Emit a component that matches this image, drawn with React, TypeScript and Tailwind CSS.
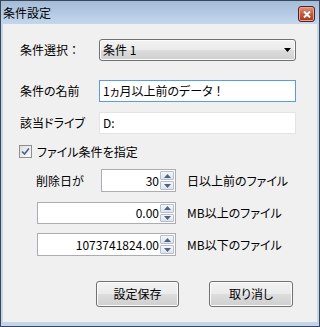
import React from "react";

function SpinBox({ width, height, value }: { width: string; height: string; value: string }) {
  return (
    <div className={`${width} ${height} flex border border-[#abadb3] bg-white`}>
      <div className="flex-1 flex items-center justify-end pr-[1px] text-[12px] leading-none text-black">{value}</div>
      <div className="w-[15px] flex flex-col gap-[1px] py-[1px] pr-[1px]">
        <div className="flex-1 border border-[#b5bfcc] rounded-[1px] bg-gradient-to-b from-[#f4f6f9] to-[#dfe4ec] flex items-center justify-center">
          <svg width="7" height="4" viewBox="0 0 7 4"><path d="M0 4 L3.5 0 L7 4 Z" fill="#4e6383" /></svg>
        </div>
        <div className="flex-1 border border-[#b5bfcc] rounded-[1px] bg-gradient-to-b from-[#f4f6f9] to-[#dfe4ec] flex items-center justify-center">
          <svg width="7" height="4" viewBox="0 0 7 4"><path d="M0 0 L3.5 4 L7 0 Z" fill="#4e6383" /></svg>
        </div>
      </div>
    </div>
  );
}

function Btn({ label, width }: { label: string; width: string }) {
  return (
    <div className={`${width} h-[26px] rounded-[3px] border border-[#707070] bg-[linear-gradient(to_bottom,#f2f2f2_0%,#ebebeb_50%,#dddddd_51%,#cfcfcf_100%)] flex items-center justify-center text-[12px] leading-none text-black shadow-[inset_0_0_0_1px_#fcfcfc]`}>
      {label}
    </div>
  );
}

export default function App() {
  return (
    <div className="w-[320px] h-[327px] bg-[#c2d5eb] border border-[#38475a] flex flex-col font-['Noto_Sans_CJK_JP','Noto_Sans',sans-serif] [font-feature-settings:'palt'] overflow-hidden">
      {/* title bar */}
      <div className="h-[23px] flex items-center justify-between bg-gradient-to-b from-[#a5bcd8] to-[#c3d6ec] pl-[2px] pr-[4px]">
        <span className="text-[12px] leading-none text-black">条件設定</span>
        <div className="w-[17px] h-[16px] mt-[3px] rounded-[3px] border border-[#4b2322] bg-gradient-to-b from-[#e1937d] via-[#c55a42] to-[#a8321e] flex items-center justify-center shadow-[inset_0_0_0_1px_#e9a892]">
          <svg width="8" height="7" viewBox="0 0 8 7">
            <path d="M1 0.5 L7 6.5 M7 0.5 L1 6.5" stroke="#ffffff" strokeWidth="2" />
          </svg>
        </div>
      </div>
      {/* client */}
      <div className="flex-1 mx-[2px] mb-[4px] bg-[#f0f0f0] flex flex-col text-[12px] leading-none text-black">
        {/* combo row */}
        <div className="mt-[15px] pl-[17px] flex items-center">
          <div className="w-[79px]">条件選択<span className="[font-feature-settings:normal]">：</span></div>
          <div className="w-[197px] h-[22px] rounded-[3px] border border-[#707070] bg-[linear-gradient(to_bottom,#f2f2f2_0%,#ebebeb_50%,#dddddd_51%,#cfcfcf_100%)] shadow-[inset_0_0_0_1px_#fcfcfc] flex items-center justify-between pl-[3px] pr-[4px]">
            <span>条件 1</span>
            <svg width="7" height="4" viewBox="0 0 7 4"><path d="M0 0 L7 0 L3.5 4 Z" fill="#000" /></svg>
          </div>
        </div>
        {/* name row */}
        <div className="mt-[19px] pl-[17px] flex items-center">
          <div className="w-[79px]">条件の名前</div>
          <div className="w-[197px] h-[22px] border border-[#569de5] bg-white flex items-center pl-[3px]">
            1ヵ月以上前のデータ<span className="[font-feature-settings:normal]">！</span>
          </div>
        </div>
        {/* drive row */}
        <div className="mt-[10px] pl-[17px] flex items-center">
          <div className="w-[79px]">該当ドライブ</div>
          <div className="w-[197px] h-[22px] border border-[#e3e3e3] bg-white flex items-center pl-[3px]">D:</div>
        </div>
        {/* checkbox row */}
        <div className="mt-[11px] pl-[16px] flex items-center gap-[5px]">
          <div className="w-[13px] h-[13px] border border-[#8e8f8f] bg-gradient-to-br from-[#dedede] to-[#fbfbfb] flex items-center justify-center">
            <svg width="9" height="9" viewBox="0 0 9 9"><path d="M1 4.5 L3.5 7 L8 1.5" stroke="#4a5f97" strokeWidth="1.6" fill="none" /></svg>
          </div>
          <span>ファイル条件を指定</span>
        </div>
        {/* spin row 1 */}
        <div className="mt-[11px] pl-[33px] flex items-center">
          <div className="w-[65px]">削除日が</div>
          <SpinBox width="w-[75px]" height="h-[23px]" value="30" />
          <span className="ml-[11px]">日以上前のファイル</span>
        </div>
        {/* spin row 2 */}
        <div className="mt-[10px] pl-[34px] flex items-center">
          <SpinBox width="w-[139px]" height="h-[22px]" value="0.00" />
          <span className="ml-[11px]">MB以上のファイル</span>
        </div>
        {/* spin row 3 */}
        <div className="mt-[9px] pl-[34px] flex items-center">
          <SpinBox width="w-[139px]" height="h-[23px]" value="1073741824.00" />
          <span className="ml-[11px]">MB以下のファイル</span>
        </div>
        {/* buttons */}
        <div className="mt-[25px] pl-[93px] flex items-center gap-[30px]">
          <Btn label="設定保存" width="w-[83px]" />
          <Btn label="取り消し" width="w-[84px]" />
        </div>
      </div>
    </div>
  );
}
